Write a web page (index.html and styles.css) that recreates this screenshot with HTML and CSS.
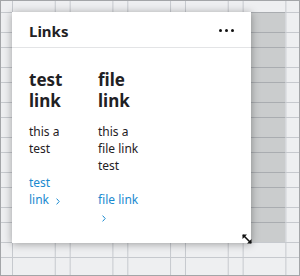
FILE: index.html
```html
<!DOCTYPE html>
<html lang="en">
<head>
<meta charset="utf-8">
<title>Links widget</title>
<link rel="stylesheet" href="styles.css">
</head>
<body>
<div class="frame">
  <div class="canvas">
    <div class="placeholder"></div>
    <section class="card">
      <header class="card-head">
        <h2 class="card-title">Links</h2>
        <button class="more" aria-label="More options"><span></span><span></span><span></span></button>
      </header>
      <div class="links">
        <article class="item">
          <h3 class="item-title">test link</h3>
          <p class="item-text">this a test</p>
          <a class="item-link" href="#">test link <svg class="chev" width="4" height="7" viewBox="0 0 4 7"><path d="M0.6 0.6 L3.2 3.5 L0.6 6.4" fill="none" stroke="currentColor" stroke-width="1"/></svg></a>
        </article>
        <article class="item">
          <h3 class="item-title">file link</h3>
          <p class="item-text">this a file link test</p>
          <a class="item-link" href="#">file link <svg class="chev" width="4" height="7" viewBox="0 0 4 7"><path d="M0.6 0.6 L3.2 3.5 L0.6 6.4" fill="none" stroke="currentColor" stroke-width="1"/></svg></a>
        </article>
      </div>
      <svg class="resize" width="12" height="12" viewBox="0 0 12 12" aria-hidden="true">
        <path d="M2 2 L10 10" stroke="#111" stroke-width="1.6"/>
        <path d="M1.5 6 L1.5 1.5 L6 1.5 Z" fill="#111"/>
        <path d="M10.5 6 L10.5 10.5 L6 10.5 Z" fill="#111"/>
      </svg>
    </section>
  </div>
</div>
</body>
</html>
```
FILE: styles.css
```css
* { box-sizing: border-box; }
html, body { margin: 0; padding: 0; }
body { font-family: "Noto Sans", "DejaVu Sans", sans-serif; color: #1f2124; }

.frame {
  width: 300px;
  height: 276px;
  border: 1px solid #a3a5a8;
  background: #eeeff1;
  overflow: hidden;
}

.canvas {
  height: 100%;
  display: grid;
  grid-template-columns: max-content;
  grid-template-rows: max-content;
  padding: 11px 0 0 11px;
  background-image:
    linear-gradient(to bottom, #c6c9ce 0, #c6c9ce 1px, transparent 1px, transparent 20px, #c6c9ce 20px, #c6c9ce 21px, transparent 21px),
    linear-gradient(to right, #c6c9ce 0, #c6c9ce 1px, transparent 1px, transparent 43px, #c6c9ce 43px, #c6c9ce 44px, transparent 44px);
  background-size: 100% 35px, 57.67px 100%;
  background-position: 0 11px, 11px 0;
}

.placeholder {
  grid-area: 1 / 1;
  width: 273px;
  height: 230px;
  background: rgba(40, 42, 46, 0.18);
}

.card {
  grid-area: 1 / 1;
  position: relative;
  width: 239px;
  height: 231px;
  background: #fff;
  box-shadow: 0 1px 8px rgba(0, 0, 0, 0.35);
}

.card-head {
  height: 36px;
  display: flex;
  align-items: center;
  justify-content: space-between;
  padding: 0 17px;
  border-bottom: 1px solid #e3e4e6;
}

.card-title {
  margin: 0;
  font-size: 15px;
  font-weight: 700;
  line-height: 20px;
  padding-top: 2px;
}

.more {
  display: flex;
  gap: 3px;
  padding: 0;
  margin: 0 0 -2px 0;
  border: 0;
  background: none;
}
.more span {
  width: 3px;
  height: 3px;
  border-radius: 50%;
  background: #111;
}

.links {
  display: grid;
  grid-template-columns: 36px 44px;
  column-gap: 33px;
  padding: 21px 17px 0;
}

.item-title {
  margin: 0;
  font-size: 17px;
  font-weight: 700;
  line-height: 21px;
}

.item-text {
  margin: 12px 0 0;
  font-size: 12px;
  line-height: 17px;
}

.item-link {
  display: block;
  margin-top: 17px;
  font-size: 12px;
  line-height: 17px;
  color: #1a8ad0;
  text-decoration: none;
}

.chev {
  margin-left: 4px;
  vertical-align: -1px;
}

.resize {
  position: absolute;
  right: -2px;
  bottom: -2px;
}
```
